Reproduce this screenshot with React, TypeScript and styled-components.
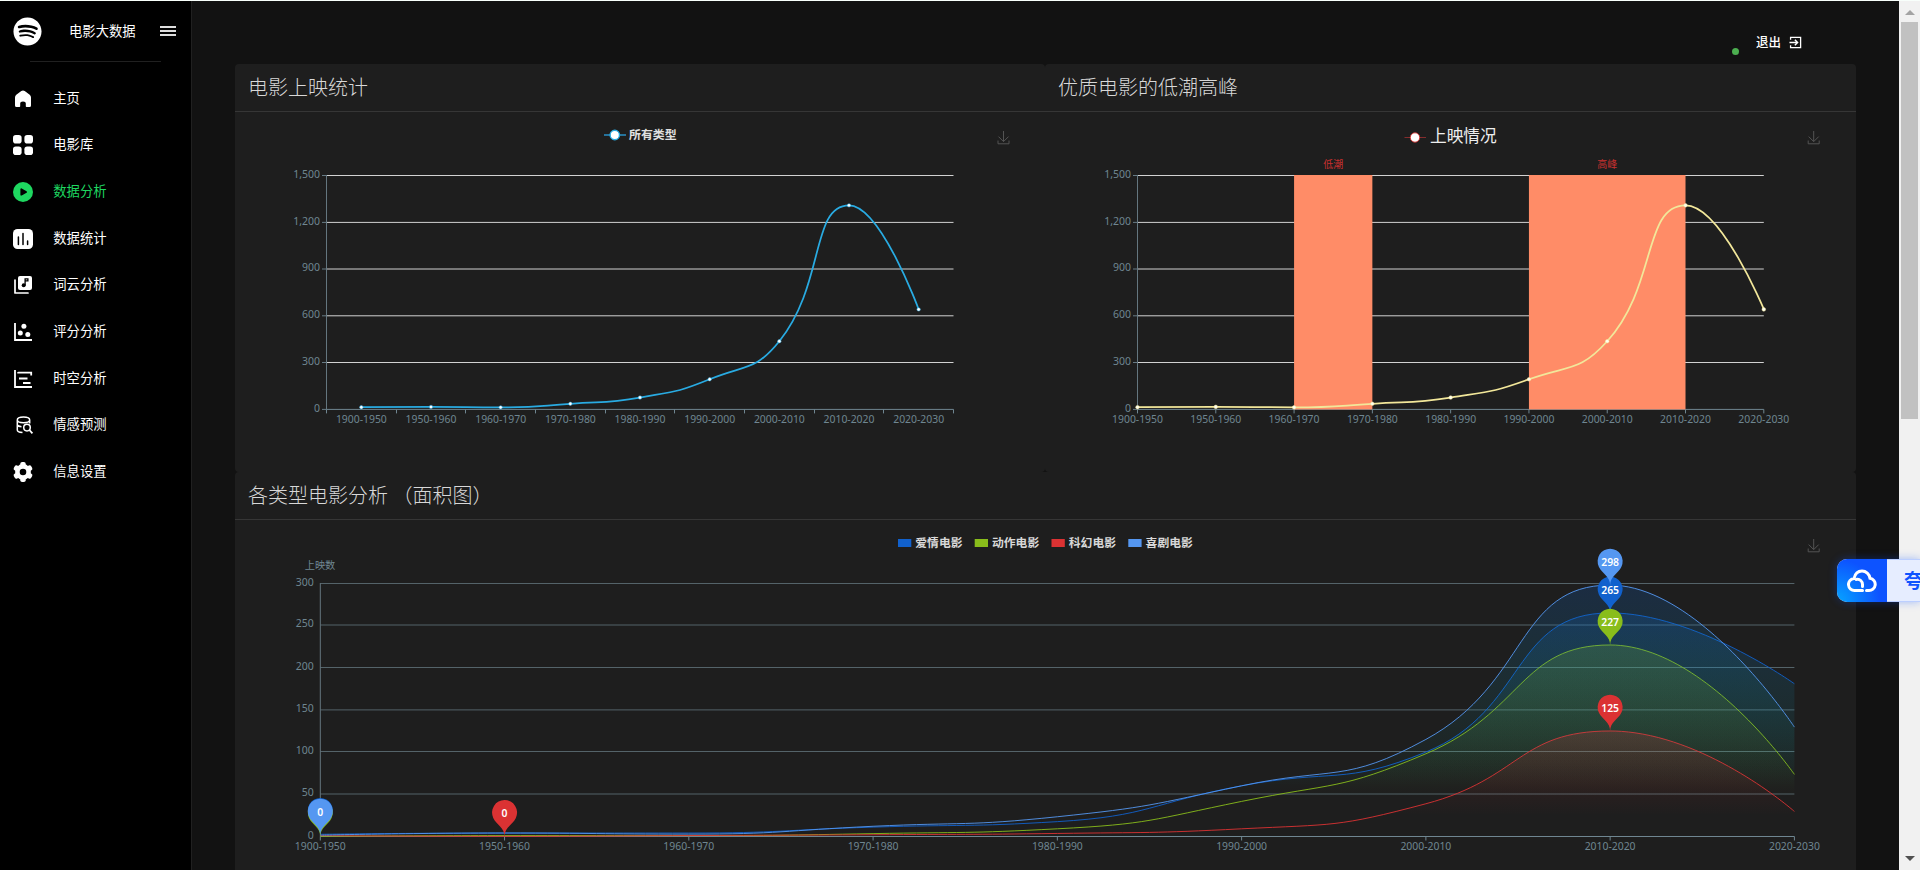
import React from 'react';
import styled, { createGlobalStyle } from 'styled-components';
import { FaSpotify } from 'react-icons/fa';

const cjk = '"Noto Sans CJK SC", sans-serif';
const latin = '"Noto Sans", "Noto Sans CJK SC", sans-serif';

const GlobalStyle = createGlobalStyle`
  *, *::before, *::after { box-sizing: border-box; }
  body { margin: 0; background: #121212; font-family: ${cjk}; overflow: hidden; }
  svg { display: block; }
  svg text { font-family: ${latin}; }
`;

const Page = styled.div`
  position: relative;
  display: flex;
  width: 1920px;
  height: 870px;
  overflow: hidden;
  border-top: 1px solid #f8fffb;
  background: #121212;
`;

const Sidebar = styled.aside`
  width: 192px;
  flex: none;
  background: #000;
  border-right: 1px solid #202020;
`;

const Brand = styled.div`
  display: flex;
  align-items: center;
  height: 61px;
  margin: 0 30px;
  border-bottom: 1px solid #202020;
`;

const BrandLogo = styled.div`
  width: 29px;
  flex: none;
  margin-left: -17px;
  color: #fff;
`;

const BrandName = styled.span`
  margin-left: 27px;
  color: #fff;
  font-size: 13.33px;
  line-height: 20px;
  white-space: nowrap;
`;

const MenuButton = styled.button`
  display: flex;
  flex-direction: column;
  gap: 2px;
  flex: none;
  width: 16px;
  margin-left: 24px;
  padding: 0;
  border: 0;
  background: none;

  i { display: block; height: 2px; width: 16px; background: #ddd; }
`;

const Nav = styled.nav`
  display: flex;
  flex-direction: column;
  padding-top: 12.5px;
`;

const NavItem = styled.a<{ $active?: boolean }>`
  display: flex;
  align-items: center;
  height: 46.67px;
  padding-left: 11px;
  color: ${p => (p.$active ? '#1ed760' : '#fff')};
  font-size: 13.33px;
  line-height: 20px;

  svg { width: 24px; height: 24px; margin: 2px 18.3px 0 0; flex: none; }
`;

const Main = styled.main`
  flex: 1;
  display: flex;
  flex-direction: column;
  min-width: 0;
  padding: 0 43px;
`;

const TopBar = styled.header`
  display: flex;
  flex: none;
  justify-content: flex-end;
  height: 63px;
  padding: 31px 54px 0 0;
`;

const StatusDot = styled.span`
  width: 7px;
  height: 7px;
  margin: 16px 17px 0 0;
  border-radius: 50%;
  background: #4caf50;
`;

const Logout = styled.a`
  display: flex;
  align-items: center;
  gap: 8px;
  height: 20px;
  color: #fff;
  font-size: 12.5px;
  font-weight: 500;
  line-height: 20px;
`;

const CardGrid = styled.section`
  display: grid;
  flex: none;
  grid-template-columns: 810px 811px;
  width: 1621px;
`;

const Card = styled.article<{ $wide?: boolean }>`
  grid-column: ${p => (p.$wide ? '1 / -1' : 'auto')};
  border-radius: 4px;
  background: #1e1e1e;
  overflow: hidden;
`;

const CardTitle = styled.h4`
  height: 48px;
  margin: 0;
  padding: 8px 13px 0;
  border-bottom: 1px solid #363636;
  color: #d8d8d8;
  font-size: 20px;
  font-weight: 300;
  line-height: 30px;
`;

const Scrollbar = styled.div`
  display: flex;
  flex-direction: column;
  align-items: center;
  width: 21px;
  flex: none;
  background: #f1f1f1;
`;

const ScrollArrow = styled.span<{ $down?: boolean }>`
  width: 0;
  height: 0;
  margin: ${p => (p.$down ? 'auto 0 9px' : '9px 0 7px')};
  border: solid transparent;
  border-width: ${p => (p.$down ? '5px 5px 0' : '0 5px 5px')};
  border-top-color: ${p => (p.$down ? '#505050' : 'transparent')};
  border-bottom-color: ${p => (p.$down ? 'transparent' : '#a3a3a3')};
`;

const ScrollThumb = styled.div`
  width: 17px;
  height: 397px;
  background: #c1c1c1;
`;

const CloudWidget = styled.div`
  position: absolute;
  top: 558px;
  right: 0;
  display: flex;
  width: 83px;
  height: 43px;
  border-radius: 10px 0 0 10px;
  overflow: hidden;
  background: #e6edff;
  box-shadow: 0 0 8px rgba(13, 83, 255, 0.35);
`;

const CloudMark = styled.div`
  display: flex;
  align-items: center;
  justify-content: center;
  width: 50px;
  flex: none;
  background: radial-gradient(circle at 0 100%, #06a5ff 0, #0d53ff 65%);
`;

const CloudLabel = styled.span`
  width: 33px;
  padding-left: 17px;
  border-top: 1px solid #bccfff;
  border-bottom: 1px solid #bccfff;
  color: #0d53ff;
  font-size: 19px;
  font-weight: 700;
  line-height: 40px;
  white-space: nowrap;
  overflow: hidden;
`;

type Pt = [number, number];

/* Smooth line through the points, with control points kept within each segment's extent. */
function smoothPath(pts: Pt[], smooth = 0.5): string {
  const clamp = (v: number, a: number, b: number) => Math.max(Math.min(v, Math.max(a, b)), Math.min(a, b));
  let d = `M${pts[0][0]},${pts[0][1]}`;
  let [cx0, cy0] = pts[0];
  for (let i = 1; i < pts.length; i++) {
    const [px, py] = pts[i - 1];
    const [x, y] = pts[i];
    let cx1 = x;
    let cy1 = y;
    let nx0 = x;
    let ny0 = y;
    if (i < pts.length - 1) {
      const [nx, ny] = pts[i + 1];
      const lenPrev = Math.hypot(x - px, y - py);
      const lenNext = Math.hypot(nx - x, ny - y);
      const ratio = lenNext / (lenNext + lenPrev);
      const vx = nx - px;
      const vy = ny - py;
      nx0 = clamp(x + vx * smooth * ratio, nx, x);
      ny0 = clamp(y + vy * smooth * ratio, ny, y);
      cx1 = clamp(x - ((nx0 - x) * lenPrev) / lenNext, px, x);
      cy1 = clamp(y - ((ny0 - y) * lenPrev) / lenNext, py, y);
      nx0 = x + ((x - cx1) * lenNext) / lenPrev;
      ny0 = y + ((y - cy1) * lenNext) / lenPrev;
    }
    d += `C${cx0.toFixed(2)},${cy0.toFixed(2)} ${cx1.toFixed(2)},${cy1.toFixed(2)} ${x},${y}`;
    cx0 = nx0;
    cy0 = ny0;
  }
  return d;
}

const periods = [
  '1900-1950', '1950-1960', '1960-1970', '1970-1980', '1980-1990',
  '1990-2000', '2000-2010', '2010-2020', '2020-2030',
];
const totals = [14, 16, 13, 36, 76, 193, 437, 1308, 641];
const AXIS = '#64767f';
const LABEL = '#6f8691';

function SaveIcon({ x, y }: { x: number; y: number }) {
  return (
    <path
      d={`M${x + 6},${y}v10.4M${x + 1},${y + 5.6}l5,5l5,-5M${x + 0.5},${y + 9.5}v3.3h11v-3.3`}
      fill="none" stroke="#565656" strokeWidth="0.95"
    />
  );
}

interface AxesProps {
  left: number; right: number; rows: number[]; labels: string[];
  ticks: number[]; labelXs: number[]; grid: string; yTicks?: boolean;
}

function Axes({ left, right, rows, labels, ticks, labelXs, grid, yTicks }: AxesProps) {
  const top = rows[0];
  const bottom = rows[rows.length - 1];
  return (
    <g>
      {rows.slice(0, -1).map(y => (
        <line key={y} x1={left} x2={right} y1={y} y2={y} stroke={grid} strokeWidth="0.95" />
      ))}
      <line x1={left} x2={left} y1={top - 0.5} y2={bottom} stroke={AXIS} />
      <line x1={left} x2={right} y1={bottom} y2={bottom} stroke={LABEL} />
      {yTicks && rows.map(y => (
        <line key={y} x1={left - 4.5} x2={left} y1={y} y2={y} stroke={LABEL} strokeWidth="0.9" />
      ))}
      {ticks.map(x => (
        <line key={x} x1={x} x2={x} y1={bottom} y2={bottom + 4} stroke={LABEL} />
      ))}
      {rows.map((y, i) => (
        <text key={y} x={left - 6.5} y={y + 2.4} textAnchor="end" fontSize="10.5" fill={LABEL}>{labels[i]}</text>
      ))}
      {periods.map((p, i) => (
        <text key={p} x={labelXs[i]} y={bottom + 13.8} textAnchor="middle" fontSize="10.4" fill={LABEL}>{p}</text>
      ))}
    </g>
  );
}

const smallRows = [175.5, 222.4, 269, 315.8, 362.5, 409.4];
const smallLabels = ['1,500', '1,200', '900', '600', '300', '0'];
const smallY = (v: number) => 409.4 - v * 0.156;

function ReleaseChart() {
  const left = 326.5;
  const right = 953.5;
  const step = (right - left) / 9;
  const xs = periods.map((_, i) => left + step * (i + 0.5));
  const pts = totals.map((v, i): Pt => [xs[i], smallY(v)]);
  return (
    <svg width="810" height="360" viewBox="235 112 810 360">
      <line x1="604" x2="626" y1="135" y2="135" stroke="#26739c" strokeWidth="1.8" />
      <circle cx="614.8" cy="135" r="4.7" fill="#fff" stroke="#29abe2" strokeWidth="1.4" />
      <text x="629" y="138.6" fontSize="11.9" fontWeight="700" fill="#e0e0e0">所有类型</text>
      <SaveIcon x={997.5} y={131} />
      <Axes left={left} right={right} rows={smallRows} labels={smallLabels} grid="#dcdcdc" yTicks
        ticks={Array.from({ length: 10 }, (_, i) => Math.floor(left + step * i) + 0.5)} labelXs={xs} />
      <path d={smoothPath(pts)} fill="none" stroke="#29abe2" strokeWidth="1.75" />
      {pts.map(([x, y]) => <circle key={x} cx={x} cy={y} r="1.7" fill="#fff" stroke="#29abe2" strokeWidth="0.5" />)}
    </svg>
  );
}

function PeakChart() {
  const left = 1137.5;
  const right = 1763.8;
  const step = (right - left) / 8;
  const xs = periods.map((_, i) => left + step * i);
  const pts = totals.map((v, i): Pt => [xs[i], smallY(v)]);
  const bands = [{ from: 2, to: 3, name: '低潮' }, { from: 5, to: 7, name: '高峰' }];
  return (
    <svg width="811" height="360" viewBox="1045 112 811 360">
      <line x1="1404.5" x2="1426" y1="137.5" y2="137.5" stroke="#8e2f2f" strokeWidth="0.9" />
      <circle cx="1415" cy="137.5" r="4.7" fill="#fff" stroke="#d0302f" strokeWidth="0.9" />
      <text x="1430" y="142.3" fontSize="16.7" fill="#eee">上映情况</text>
      <SaveIcon x={1807.7} y={131} />
      <Axes left={left} right={right} rows={smallRows} labels={smallLabels} grid="#dcdcdc" yTicks
        ticks={xs} labelXs={xs} />
      {bands.map(b => (
        <g key={b.name}>
          <rect x={xs[b.from]} y="175" width={xs[b.to] - xs[b.from]} height="234.4" fill="#ff8c67" />
          <text x={(xs[b.from] + xs[b.to]) / 2} y="168.3" textAnchor="middle" fontSize="10" fill="#c9302f">{b.name}</text>
        </g>
      ))}
      <path d={smoothPath(pts)} fill="none" stroke="#f2e79a" strokeWidth="1.75" />
      {pts.map(([x, y]) => <circle key={x} cx={x} cy={y} r="1.8" fill="#fffff0" stroke="#f2e79a" strokeWidth="0.5" />)}
    </svg>
  );
}

interface Series { id: string; name: string; color: string; from: string; to: string; legendX: number; data: number[] }

const genres: Series[] = [
  { id: 'romance', name: '爱情电影', color: '#1161cd', from: 'rgb(16,97,204)', to: 'rgb(17,235,210)', legendX: 898,
    data: [2.5, 4, 4, 11, 17.5, 60, 100, 265, 181] },
  { id: 'action', name: '动作电影', color: '#89bd1b', from: 'rgb(137,189,27)', to: 'rgb(137,189,27)', legendX: 974.7,
    data: [0, 1, 1, 3.3, 9, 41.5, 98, 227, 73.5] },
  { id: 'scifi', name: '科幻电影', color: '#db3233', from: 'rgb(219,50,51)', to: 'rgb(219,50,51)', legendX: 1051.5,
    data: [1, 0, 1, 2, 3.5, 9, 38.7, 125, 29.6] },
  { id: 'comedy', name: '喜剧电影', color: '#5597f1', from: 'rgb(16,97,204)', to: 'rgb(17,235,210)', legendX: 1128.3,
    data: [1.5, 4, 2.7, 12, 23.3, 60, 115, 298, 129.6] },
];

/* Map-pin marker whose tip stands on (x, y). */
function Pin({ x, y, color, label }: { x: number; y: number; color: string; label: number }) {
  const h = 41.7;
  const r = h * 0.3;
  const dy = (r * r) / (h - r);
  const cy = y - h + r + dy;
  const sin = dy / r;
  const cos = Math.sqrt(1 - sin * sin);
  const dx = cos * r;
  const k = r * 0.6;
  const d = `M${x - dx},${cy + dy}A${r},${r} 0 1 1 ${x + dx},${cy + dy}`
    + `C${x + dx - sin * k},${cy + dy + cos * k} ${x},${y - r * 0.7} ${x},${y}`
    + `C${x},${y - r * 0.7} ${x - dx + sin * k},${cy + dy + cos * k} ${x - dx},${cy + dy}Z`;
  return (
    <g>
      <path d={d} fill={color} />
      <text x={x} y={cy + 4.6} textAnchor="middle" fontSize="10.4" fontWeight="600" fill="#fff">{label}</text>
    </g>
  );
}

function GenreChart() {
  const left = 320.3;
  const right = 1794.4;
  const base = 836.4;
  const xs = periods.map((_, i) => left + ((right - left) / 8) * i);
  const yOf = (v: number) => base - v * 0.8433;
  return (
    <svg width="1621" height="360" viewBox="235 520 1621 360">
      <defs>
        {genres.map(g => (
          <linearGradient key={g.id} id={g.id} x1="0" y1="0" x2="0" y2="1">
            <stop offset="0" stopColor={g.from} stopOpacity="0.21" />
            <stop offset="0.8" stopColor={g.to} stopOpacity="0" />
          </linearGradient>
        ))}
      </defs>
      {genres.map(g => (
        <g key={g.id}>
          <rect x={g.legendX} y="539" width="13.3" height="8" fill={g.color} />
          <text x={g.legendX + 17.3} y="546.8" fontSize="11.8" fontWeight="700" fill="#d8d8d8">{g.name}</text>
        </g>
      ))}
      <SaveIcon x={1807.7} y={539} />
      <text x="320" y="568.6" textAnchor="middle" fontSize="10.2" fill={LABEL}>上映数</text>
      <Axes left={left} right={right} rows={[583.5, 625, 667.5, 709.9, 751.5, 794, 836.5]}
        labels={['300', '250', '200', '150', '100', '50', '0']} grid="#57676e" ticks={xs} labelXs={xs} />
      {genres.map(g => {
        const line = smoothPath(g.data.map((v, i): Pt => [xs[i], yOf(v)]));
        return (
          <g key={g.id}>
            <path d={`${line}L${right},${base}L${left},${base}Z`} fill={`url(#${g.id})`} />
            <path d={line} fill="none" stroke={g.color} strokeWidth="0.9" />
          </g>
        );
      })}
      {genres.map(g => {
        const low = g.data.indexOf(Math.min(...g.data));
        return (
          <g key={g.id}>
            <Pin x={xs[7]} y={yOf(g.data[7])} color={g.color} label={g.data[7]} />
            <Pin x={xs[low]} y={yOf(g.data[low])} color={g.color} label={0} />
          </g>
        );
      })}
    </svg>
  );
}

const navItems: { label: string; icon: React.ReactNode; active?: boolean }[] = [
  {
    label: '主页',
    icon: <path fill="currentColor" d="M10.3 4.1Q12 2.9 13.7 4.1L18.7 7.8Q20 8.8 20 10.5V18.5Q20 20 18.5 20H15.5Q14.8 20 14.8 19.3V16.5Q14.8 14.5 12 14.5Q9.2 14.5 9.2 16.5V19.3Q9.2 20 8.5 20H5.5Q4 20 4 18.5V10.5Q4 8.8 5.3 7.8Z" />,
  },
  {
    label: '电影库',
    icon: (
      <g fill="currentColor">
        <rect x="2" y="2" width="8.6" height="8.6" rx="2.8" />
        <rect x="13.4" y="2" width="8.6" height="8.6" rx="2.8" />
        <rect x="2" y="13.4" width="8.6" height="8.6" rx="2.8" />
        <rect x="13.4" y="13.4" width="8.6" height="8.6" rx="2.8" />
      </g>
    ),
  },
  {
    label: '数据分析',
    active: true,
    icon: (
      <g>
        <circle cx="12" cy="12" r="10" fill="currentColor" />
        <path d="M10.3 9.3v5.4l4.8-2.7z" fill="#000" stroke="#000" strokeWidth="1.8" strokeLinejoin="round" />
      </g>
    ),
  },
  {
    label: '数据统计',
    icon: (
      <g>
        <rect x="2" y="2" width="20" height="20" rx="4.5" fill="currentColor" />
        <path d="M7.4 10v7.5M12 6.5v11M16.6 14v3.5" stroke="#000" strokeWidth="1.5" strokeLinecap="round" />
      </g>
    ),
  },
  {
    label: '词云分析',
    icon: (
      <g>
        <path d="M4 7v13h13" fill="none" stroke="currentColor" strokeWidth="1.7" strokeLinejoin="round" strokeLinecap="round" />
        <rect x="7" y="3" width="14" height="14" rx="2" fill="currentColor" />
        <circle cx="12.7" cy="12.3" r="2" fill="#000" />
        <path d="M14.1 12.3V5.8h2.8v2h-2.2" fill="none" stroke="#000" strokeWidth="1.3" />
      </g>
    ),
  },
  {
    label: '评分分析',
    icon: (
      <g fill="currentColor">
        <path d="M4 3v17h17" fill="none" stroke="currentColor" strokeWidth="1.8" />
        <circle cx="12.9" cy="6.2" r="2.5" />
        <circle cx="9.3" cy="12.9" r="2.5" />
        <circle cx="16.8" cy="14.6" r="2.5" />
      </g>
    ),
  },
  {
    label: '时空分析',
    icon: <path d="M4 3v17h17M7.2 4.9V6.5M7.2 5.6H20.2V8.6M8 11.5h8.5M12 16h7.5" fill="none" stroke="currentColor" strokeWidth="1.8" />,
  },
  {
    label: '情感预测',
    icon: (
      <g fill="none" stroke="currentColor" strokeWidth="1.5">
        <path d="M6.3 7c0-1.8 2.5-3 6.2-3s6.2 1.2 6.2 3-2.5 2.7-6.2 2.7S6.3 8.8 6.3 7zM6.3 7v10c0 1.3 2 2.3 5.2 2.6M18.7 7v3.5M6.3 12c.6 1 2 1.5 4.2 1.7" />
        <circle cx="16" cy="14.6" r="3.3" />
        <path d="M18.4 17l3 3.3" strokeWidth="1.8" />
      </g>
    ),
  },
  {
    label: '信息设置',
    icon: (
      <g fill="currentColor">
        <circle cx="12" cy="12" r="5.6" fill="none" stroke="currentColor" strokeWidth="4.6" />
        {[0, 60, 120, 180, 240, 300].map(a => (
          <rect key={a} x="9.3" y="2" width="5.4" height="5" rx="1.8" transform={`rotate(${a} 12 12)`} />
        ))}
      </g>
    ),
  },
];

export default function App() {
  return (
    <Page>
      <GlobalStyle />
      <Sidebar>
        <Brand>
          <BrandLogo><FaSpotify size={29} /></BrandLogo>
          <BrandName>电影大数据</BrandName>
          <MenuButton aria-label="menu"><i /><i /><i /></MenuButton>
        </Brand>
        <Nav>
          {navItems.map(item => (
            <NavItem key={item.label} $active={item.active}>
              <svg viewBox="0 0 24 24">{item.icon}</svg>
              {item.label}
            </NavItem>
          ))}
        </Nav>
      </Sidebar>
      <Main>
        <TopBar>
          <StatusDot />
          <Logout>
            退出
            <svg width="13" height="13" viewBox="0 0 14 14" fill="none" stroke="currentColor">
              <path d="M1.7 4V1.5H12.5V12.5H1.7V10" strokeWidth="1.4" />
              <path d="M0.5 7H9M6.3 4L9.3 7L6.3 10" strokeWidth="1.5" />
            </svg>
          </Logout>
        </TopBar>
        <CardGrid>
          <Card>
            <CardTitle>电影上映统计</CardTitle>
            <ReleaseChart />
          </Card>
          <Card>
            <CardTitle>优质电影的低潮高峰</CardTitle>
            <PeakChart />
          </Card>
          <Card $wide>
            <CardTitle>各类型电影分析 （面积图）</CardTitle>
            <GenreChart />
          </Card>
        </CardGrid>
      </Main>
      <Scrollbar>
        <ScrollArrow />
        <ScrollThumb />
        <ScrollArrow $down />
      </Scrollbar>
      <CloudWidget>
        <CloudMark>
          <svg width="30" height="24" viewBox="0 0 30 24" fill="none" stroke="#fff" strokeWidth="3" strokeLinecap="round">
            <path d="M15.5 21.5H8a6 6 0 0 1-1-12C8 5 11 2 15 2s7.5 3 8 7.2a6.2 6.2 0 0 1-1.5 12.3h-2" />
            <path d="M9 10.5c4-1 6.5 2 6.5 5v2" />
          </svg>
        </CloudMark>
        <CloudLabel>夸</CloudLabel>
      </CloudWidget>
    </Page>
  );
}
